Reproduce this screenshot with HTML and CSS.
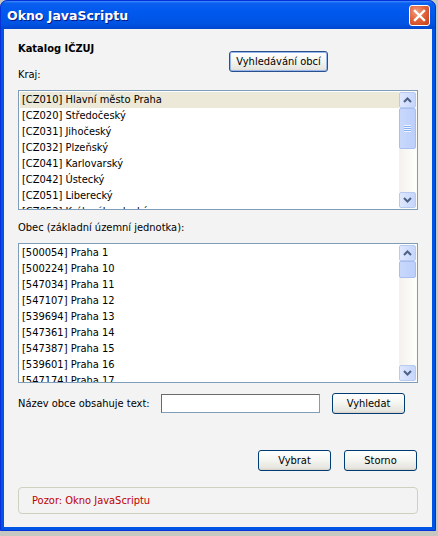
FILE: index.html
```html
<!DOCTYPE html>
<html lang="cs">
  <head>
    <meta charset="UTF-8" />
    <title>Okno JavaScriptu</title>
    <link rel="stylesheet" href="styles.css">
  </head>
  <body>
    <div class="window">
      <div class="titlebar">
        <span class="title">Okno JavaScriptu</span>
        <span class="close">
          <svg width="13" height="13" viewBox="0 0 13 13">
            <path d="M2 2 L11 11 M11 2 L2 11" stroke="#fff" stroke-width="2.4" stroke-linecap="square" />
          </svg>
        </span>
      </div>

      <div class="content">
        <div class="top-row">
          <div class="head">
            <h1>Katalog IČZUJ</h1>
            <p class="label">Kraj:</p>
          </div>
          <button class="btn btn-search-area">Vyhledávání obcí</button>
        </div>

        <div class="listbox">
          <ul class="items">
            <li class="selected">[CZ010] Hlavní město Praha</li>
            <li>[CZ020] Středočeský</li>
            <li>[CZ031] Jihočeský</li>
            <li>[CZ032] Plzeňský</li>
            <li>[CZ041] Karlovarský</li>
            <li>[CZ042] Ústecký</li>
            <li>[CZ051] Liberecký</li>
            <li>[CZ052] Královéhradecký</li>
          </ul>
          <div class="scrollbar">
            <div class="sb-btn"><svg width="9" height="6" viewBox="0 0 9 6"><path d="M1 5 L4.5 1.5 L8 5" fill="none" stroke="#4d6185" stroke-width="2" /></svg></div>
            <div class="sb-track">
              <div class="sb-thumb thumb-big"><span class="grip"></span></div>
            </div>
            <div class="sb-btn"><svg width="9" height="6" viewBox="0 0 9 6"><path d="M1 1 L4.5 4.5 L8 1" fill="none" stroke="#4d6185" stroke-width="2" /></svg></div>
          </div>
        </div>

        <p class="label label-obec">Obec (základní územní jednotka):</p>

        <div class="listbox listbox-obec">
          <ul class="items">
            <li>[500054] Praha 1</li>
            <li>[500224] Praha 10</li>
            <li>[547034] Praha 11</li>
            <li>[547107] Praha 12</li>
            <li>[539694] Praha 13</li>
            <li>[547361] Praha 14</li>
            <li>[547387] Praha 15</li>
            <li>[539601] Praha 16</li>
            <li>[547174] Praha 17</li>
          </ul>
          <div class="scrollbar">
            <div class="sb-btn"><svg width="9" height="6" viewBox="0 0 9 6"><path d="M1 5 L4.5 1.5 L8 5" fill="none" stroke="#4d6185" stroke-width="2" /></svg></div>
            <div class="sb-track">
              <div class="sb-thumb thumb-small"></div>
            </div>
            <div class="sb-btn"><svg width="9" height="6" viewBox="0 0 9 6"><path d="M1 1 L4.5 4.5 L8 1" fill="none" stroke="#4d6185" stroke-width="2" /></svg></div>
          </div>
        </div>

        <div class="search-row">
          <span class="label search-label">Název obce obsahuje text:</span>
          <input type="text" class="search-input" />
          <button class="btn btn-find">Vyhledat</button>
        </div>

        <div class="actions">
          <button class="btn btn-action">Vybrat</button>
          <button class="btn btn-action">Storno</button>
        </div>

        <div class="notice">Pozor: Okno JavaScriptu</div>
      </div>
    </div>
  </body>
</html>
```

FILE: styles.css
```css
body {
  margin: 0;
  background-color: #c7c7c2;
  font-family: "DejaVu Sans Condensed", "DejaVu Sans", sans-serif;
  font-size: 11px;
  color: #000;
}
.window {
  width: 436px;
  height: 531px;
  box-sizing: border-box;
  background-color: #0055e5;
  border: 1px solid #0831d9;
  border-radius: 7px 7px 0 0;
  display: flex;
  flex-direction: column;
  padding: 0 3px 3px 3px;
}
.titlebar {
  height: 28px;
  margin: 0 -3px;
  padding: 0 6px;
  display: flex;
  align-items: center;
  justify-content: space-between;
  border-radius: 7px 7px 0 0;
  background: linear-gradient(to bottom, #3d8cff 0%, #0a5fef 8%, #0058ee 40%, #0054e3 80%, #0046cf 100%);
}
.title {
  color: #fff;
  font-family: "DejaVu Sans", sans-serif;
  font-weight: bold;
  font-size: 12.5px;
  text-shadow: 1px 1px 0 #0a1883;
  padding-top: 1px;
}
.close {
  width: 21px;
  height: 21px;
  box-sizing: border-box;
  border: 1px solid #fff;
  border-radius: 3px;
  background: radial-gradient(circle at 35% 30%, #f09f82 0%, #e2643c 45%, #c33d16 100%);
  display: flex;
  align-items: center;
  justify-content: center;
  margin-right: -1px;
}
.content {
  flex: 1;
  background-color: #f3f3f3;
  padding: 0 14px;
}
.top-row {
  display: flex;
  height: 61px;
}
.head {
  width: 211px;
}
h1 {
  font-size: 11px;
  font-weight: bold;
  margin: 12px 0 0 0;
  line-height: 16px;
}
.label {
  margin: 0;
  line-height: 16px;
}
.head .label {
  margin-top: 10px;
}
.btn {
  font-family: inherit;
  font-size: 11px;
  color: #000;
  background: linear-gradient(to bottom, #ffffff 0%, #f4f4f0 50%, #e6e5df 90%, #d6d0c5 100%);
  border: 1px solid #003c74;
  border-radius: 3px;
  padding: 0;
  height: 21px;
}
.btn-search-area {
  width: 99px;
  margin-top: 22px;
  border-color: #2a4f8f;
  box-shadow: inset 0 0 0 1px #98b8ea;
}
.listbox {
  display: flex;
  height: 120px;
  border: 1px solid #7f9db9;
  background-color: #fff;
  box-sizing: border-box;
}
.items {
  flex: 1;
  list-style: none;
  margin: 0;
  padding: 1px 0 0 1px;
  overflow: hidden;
}
.items li {
  height: 16px;
  line-height: 16px;
  padding-left: 2px;
  white-space: nowrap;
}
.items li.selected {
  background-color: #ece9d8;
}
.scrollbar {
  width: 17px;
  display: flex;
  flex-direction: column;
  background-color: #fcfcf8;
  padding: 1px 1px 1px 0;
}
.sb-btn {
  height: 16px;
  box-sizing: border-box;
  border: 1px solid #b7cbf2;
  border-radius: 2px;
  background: linear-gradient(to right, #dfe8fd, #c5d5fb);
  display: flex;
  align-items: center;
  justify-content: center;
}
.sb-track {
  flex: 1;
  background: linear-gradient(to right, #f3f1ec, #fefefb);
}
.sb-thumb {
  box-sizing: border-box;
  border: 1px solid #a8bdf1;
  border-radius: 2px;
  background: linear-gradient(to right, #c9d8fc, #bccffb);
  display: flex;
  align-items: center;
  justify-content: center;
}
.thumb-big {
  height: 41px;
}
.thumb-small {
  height: 17px;
}
.grip {
  width: 7px;
  height: 7px;
  background: repeating-linear-gradient(to bottom, #eef4fe 0px, #eef4fe 1px, #8cb0f8 1px, #8cb0f8 2px);
}
.label-obec {
  margin-top: 10px;
  margin-bottom: 7px;
}
.listbox-obec {
  height: 140px;
}
.search-row {
  display: flex;
  align-items: center;
  margin-top: 10px;
}
.search-label {
  width: 143px;
  white-space: nowrap;
}
.search-input {
  width: 159px;
  height: 19px;
  box-sizing: border-box;
  margin: 0;
  border: 1px solid #7f9db9;
  border-top-color: #6a6a6a;
  border-left-color: #6a6a6a;
  background-color: #fff;
}
.btn-find {
  width: 73px;
  margin-left: 12px;
}
.actions {
  display: flex;
  justify-content: flex-end;
  gap: 13px;
  margin-top: 36px;
  padding-right: 1px;
}
.btn-action {
  width: 73px;
}
.notice {
  margin-top: 16px;
  height: 27px;
  box-sizing: border-box;
  border: 1px solid #d0d0bf;
  border-radius: 4px;
  color: #c00000;
  line-height: 25px;
  padding-left: 13px;
}
```
